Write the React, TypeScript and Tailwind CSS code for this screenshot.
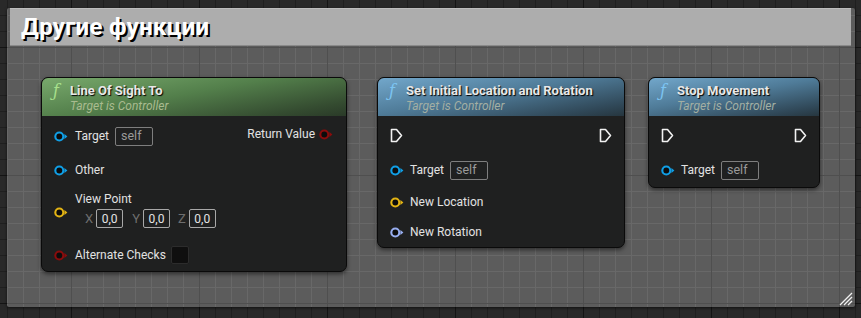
import React from "react";

const Pin = ({ color }: { color: string }) => (
  <svg width="14" height="11" viewBox="0 0 14 11" className="shrink-0">
    <circle cx="5.3" cy="5.5" r="4" fill="#0c0c0c" stroke={color} strokeWidth="2.1" />
    <path d="M10.4 3 L13.4 5.5 L10.4 8 Z" fill={color} />
  </svg>
);

const Exec = () => (
  <svg width="13" height="15" viewBox="0 0 13 15" className="shrink-0">
    <path d="M1.5 1.5 H6.5 L11.5 7.5 L6.5 13.5 H1.5 Z" fill="none" stroke="#f2f2f2" strokeWidth="1.6" strokeLinejoin="round" />
  </svg>
);

const SelfBox = () => (
  <div className="ml-[6px] flex h-[19px] w-[38px] items-center rounded-[2px] border border-[#7e7e7e] pl-[5px] text-[12.5px] text-[#9a9a9a]">
    self
  </div>
);

const VecBox = () => (
  <div className="flex h-[19px] w-[27px] items-center justify-center rounded-[2px] border border-[#a8a8a8] text-[12px] text-[#e4e4e4]">
    0,0
  </div>
);

const Header = ({
  title,
  green,
}: {
  title: string;
  green?: boolean;
}) => (
  <div
    className={
      "h-[38px] rounded-t-[6px] pl-[11px] pt-[4px] " +
      (green
        ? "bg-[linear-gradient(170deg,#78a96c_0%,#537f4b_45%,#344b30_85%,#2a3a28_100%)]"
        : "bg-[linear-gradient(170deg,#72a7cb_0%,#4f7b98_45%,#304858_85%,#26363f_100%)]")
    }
  >
    <div className="flex items-center">
      <span
        className={
          "w-[17px] text-[16px] italic leading-[17px] [font-family:'DejaVu_Serif',serif] " +
          (green ? "text-[#a8e08c]" : "text-[#7cc4f2]")
        }
      >
        ƒ
      </span>
      <span className="text-[13px] font-bold leading-[17px] text-[#e8e8e8] [text-shadow:1px_1px_1px_#000]">
        {title}
      </span>
    </div>
    <div
      className={
        "pl-[17px] text-[12px] italic leading-[15px] " +
        (green ? "text-[#a9bb8f]" : "text-[#a3afa4]")
      }
    >
      Target is Controller
    </div>
  </div>
);

const nodeCls =
  "absolute rounded-[7px] border border-[#0a0a0a] bg-[#1f2020] shadow-[0_2px_4px_rgba(0,0,0,0.5)] text-[12px] text-[#e2e2e2]";

export default function App() {
  return (
    <div
      className="h-[318px] w-[861px] overflow-hidden pl-[7px] pt-[8px] [font-family:Roboto,'Liberation_Sans',sans-serif] bg-[#292929] [background-attachment:fixed] [background-image:linear-gradient(to_right,#141414_1px,transparent_1px),linear-gradient(to_bottom,#141414_1px,transparent_1px),linear-gradient(to_right,#1f1f1f_1px,transparent_1px),linear-gradient(to_bottom,#1f1f1f_1px,transparent_1px)] [background-size:128px_128px,128px_128px,16px_16px,16px_16px] [background-position:71px_47px,71px_47px,7px_15px,7px_15px]"
    >
      <div className="relative h-[299px] w-[848px] rounded-[2px] bg-[#5c5c5c] shadow-[0_1px_3px_rgba(0,0,0,0.6)] [background-attachment:fixed] [background-image:linear-gradient(to_right,#4f4f4f_1px,transparent_1px),linear-gradient(to_bottom,#4f4f4f_1px,transparent_1px),linear-gradient(to_right,#686868_1px,transparent_1px),linear-gradient(to_bottom,#686868_1px,transparent_1px)] [background-size:128px_128px,128px_128px,16px_16px,16px_16px] [background-position:71px_47px,71px_47px,7px_15px,7px_15px]">
        <div className="ml-[3px] flex h-[37px] w-[841px] items-center border-t border-[#bdbdbd] bg-[#adadad] pl-[11px] shadow-[0_1px_0_#8a8a8a]">
          <span className="text-[24px] font-bold leading-none tracking-[0.3px] text-white [text-shadow:2px_2px_0_#000]">
            Другие функции
          </span>
        </div>

        {/* Node 1 */}
        <div className={nodeCls + " left-[34px] top-[69px] h-[195px] w-[306px]"}>
          <Header title="Line Of Sight To" green />
          <div className="pl-[12px] pr-[13px] pt-[10px]">
            <div className="flex h-[20px] items-center justify-between">
              <div className="flex items-center">
                <Pin color="#109fe6" />
                <span className="ml-[7px]">Target</span>
                <SelfBox />
              </div>
              <div className="mb-[4px] flex items-center">
                <span className="mr-[4px]">Return Value</span>
                <Pin color="#8a0c0c" />
              </div>
            </div>
            <div className="mt-[14px] flex h-[20px] items-center">
              <Pin color="#109fe6" />
              <span className="ml-[7px]">Other</span>
            </div>
            <div className="mt-[11px] flex items-center">
              <div className="mt-[6px]">
                <Pin color="#e3b414" />
              </div>
              <div className="ml-[7px] flex flex-col">
                <div className="h-[16px] leading-[16px]">View Point</div>
                <div className="mt-[2px] flex h-[19px] items-center pl-[10px] text-[13px] text-[#6e6e6e]">
                  <span className="mr-[3px]">X</span>
                  <VecBox />
                  <span className="ml-[9px] mr-[3px]">Y</span>
                  <VecBox />
                  <span className="ml-[8px] mr-[3px]">Z</span>
                  <VecBox />
                </div>
              </div>
            </div>
            <div className="mt-[18px] flex h-[18px] items-center">
              <Pin color="#8a0c0c" />
              <span className="ml-[7px]">Alternate Checks</span>
              <div className="ml-[5px] h-[18px] w-[18px] rounded-[2px] border border-[#2c2c2c] bg-[#0f0f0f]" />
            </div>
          </div>
        </div>

        {/* Node 2 */}
        <div className={nodeCls + " left-[370px] top-[69px] h-[171px] w-[248px]"}>
          <Header title="Set Initial Location and Rotation" />
          <div className="pl-[12px] pr-[12px] pt-[12px]">
            <div className="flex h-[14px] items-center justify-between">
              <Exec />
              <Exec />
            </div>
            <div className="mt-[18px] flex h-[20px] items-center">
              <Pin color="#109fe6" />
              <span className="ml-[6px]">Target</span>
              <SelfBox />
            </div>
            <div className="mt-[12px] flex h-[20px] items-center">
              <Pin color="#e3b414" />
              <span className="ml-[6px]">New Location</span>
            </div>
            <div className="mt-[10px] flex h-[20px] items-center">
              <Pin color="#98aef0" />
              <span className="ml-[6px]">New Rotation</span>
            </div>
          </div>
        </div>

        {/* Node 3 */}
        <div className={nodeCls + " left-[641px] top-[69px] h-[111px] w-[172px]"}>
          <Header title="Stop Movement" />
          <div className="pl-[12px] pr-[12px] pt-[12px]">
            <div className="flex h-[14px] items-center justify-between">
              <Exec />
              <Exec />
            </div>
            <div className="mt-[18px] flex h-[20px] items-center">
              <Pin color="#109fe6" />
              <span className="ml-[6px]">Target</span>
              <SelfBox />
            </div>
          </div>
        </div>

        {/* resize grip */}
        <svg
          width="15"
          height="15"
          viewBox="0 0 15 15"
          className="absolute bottom-[1px] right-[2px]"
        >
          <path d="M14 2 L2 14 M14 6 L6 14 M14 10 L10 14" stroke="#f2f2f2" strokeWidth="1.3" />
        </svg>
      </div>
    </div>
  );
}
